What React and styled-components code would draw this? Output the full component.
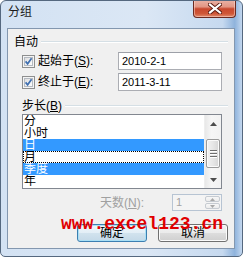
import React from "react";
import styled, { createGlobalStyle } from "styled-components";

const Global = createGlobalStyle`
  html, body { margin: 0; padding: 0; background: #ffffff; }
  body { width: 243px; height: 257px; overflow: hidden; }
  * { box-sizing: border-box; }
`;

const FONT = `"Liberation Sans", "Noto Sans CJK SC", sans-serif`;

const Window = styled.div`
  position: relative;
  width: 243px;
  height: 257px;
  border: 1px solid #55687f;
  border-radius: 6px 6px 5px 5px;
  background: linear-gradient(to right, #d3e2f3 0%, #dbe7f5 60%, #c6d9ef 92%, #8fb3dc 97%, #c4d8ef 100%);
  display: flex;
  flex-direction: column;
  padding: 0 7px 7px 6px;
  font-family: ${FONT};
  font-size: 12px;
  color: #000;
  overflow: hidden;
`;

const TitleBar = styled.div`
  height: 27px;
  display: flex;
  justify-content: space-between;
  align-items: flex-start;
  padding-left: 1px;
`;

const Title = styled.div`
  margin-top: 4px;
  line-height: 14px;
  font-size: 12px;
  color: #1b1b1b;
`;

const CloseButton = styled.div`
  width: 43px;
  height: 18px;
  margin-top: -1px;
  margin-right: -1px;
  border: 1px solid #6b2a20;
  border-top: none;
  border-radius: 0 0 4px 4px;
  background: linear-gradient(to bottom, #eab3a6 0%, #e29684 40%, #c8482e 52%, #cf5737 80%, #e08a6c 100%);
  box-shadow: inset 0 0 0 1px rgba(255, 220, 210, 0.5);
  display: flex;
  align-items: center;
  justify-content: center;
`;

const Client = styled.div`
  flex: 1;
  border: 1px solid #8397af;
  background: #f0f0f0;
  padding: 6px;
  display: flex;
  flex-direction: column;
`;

const Header = styled.div`
  display: flex;
  align-items: center;
  gap: 3px;
  height: 14px;
  line-height: 14px;
  margin-left: ${(p) => p.$indent || 0}px;
  margin-top: ${(p) => p.$top || 0}px;
`;

const HeaderLine = styled.div`
  flex: 1;
  height: 2px;
  border-top: 1px solid #d5dfe5;
  border-bottom: 1px solid #ffffff;
`;

const Section = styled.div`
  padding: 0 6px 0 8px;
  display: flex;
  flex-direction: column;
`;

const Row = styled.div`
  display: grid;
  grid-template-columns: 96px 1fr;
  align-items: center;
  height: 18px;
  margin-top: 3px;
`;

const CheckLabel = styled.div`
  display: flex;
  align-items: center;
  gap: 3px;
  line-height: 14px;
  white-space: nowrap;
`;

const TextBox = styled.div`
  height: 18px;
  border: 1px solid #abadb3;
  border-top-color: #9da0a8;
  background: #ffffff;
  padding-left: 3px;
  font-family: "Liberation Sans", sans-serif;
  font-size: 11px;
  line-height: 16px;
`;

const ListBox = styled.div`
  margin: 1px 6px 0 8px;
  height: 75px;
  border: 1px solid #828790;
  background: #ffffff;
  display: flex;
`;

const Items = styled.div`
  flex: 1;
  display: flex;
  flex-direction: column;
`;

const Item = styled.div`
  height: 12px;
  line-height: 12px;
  padding-left: 1px;
  font-size: 12px;
  background: ${(p) => (p.$selected ? "#3399ff" : "transparent")};
  color: ${(p) => (p.$selected ? "#ffffff" : "#000000")};
  outline: ${(p) => (p.$focus ? "1px dotted #000" : "none")};
  outline-offset: -1px;
  white-space: nowrap;
  overflow: hidden;
`;

const ScrollBar = styled.div`
  width: 17px;
  display: flex;
  flex-direction: column;
  background: linear-gradient(to right, #e8e8e8, #f6f6f6 40%, #f2f2f2);
  border-left: 1px solid #eeeeee;
`;

const ScrollArrow = styled.div`
  height: 17px;
  display: flex;
  align-items: center;
  justify-content: center;
`;

const Track = styled.div`
  flex: 1;
  padding: 7px 1px 0 1px;
`;

const Thumb = styled.div`
  height: 29px;
  border: 1px solid #9a9a9a;
  border-radius: 2px;
  background: linear-gradient(to right, #f2f2f2, #e6e6e6 50%, #d6d6d6);
  box-shadow: inset 0 0 0 1px #fafafa;
  display: flex;
  flex-direction: column;
  align-items: center;
  justify-content: center;
  gap: 2px;
`;

const Grip = styled.div`
  width: 7px;
  height: 1px;
  background: #6f6f6f;
  box-shadow: 0 1px 0 #ffffff;
`;

const SpinRow = styled.div`
  display: flex;
  justify-content: flex-end;
  align-items: center;
  gap: 28px;
  margin-top: 5px;
  padding-right: 6px;
  height: 17px;
`;

const DisabledLabel = styled.div`
  color: #a0a0a0;
  line-height: 14px;
  white-space: nowrap;
`;

const SpinBox = styled.div`
  width: 50px;
  height: 17px;
  border: 1px solid #b7c4d3;
  background: #f4f4f4;
  display: flex;
  align-items: stretch;
  padding: 1px 1px 1px 0;
`;

const SpinText = styled.div`
  flex: 1;
  padding-left: 3px;
  font-family: "Liberation Sans", sans-serif;
  font-size: 11px;
  line-height: 13px;
  color: #a3a3a3;
`;

const SpinButtons = styled.div`
  width: 15px;
  display: flex;
  flex-direction: column;
  gap: 1px;
`;

const SpinBtn = styled.div`
  flex: 1;
  border: 1px solid #c6cbd1;
  border-radius: 2px;
  background: linear-gradient(#f7f7f7, #ececec);
  display: flex;
  align-items: center;
  justify-content: center;
`;

const Buttons = styled.div`
  display: flex;
  justify-content: flex-end;
  gap: 11px;
  margin-top: 13px;
`;

const Button = styled.div`
  width: 70px;
  height: 18px;
  border-radius: 3px;
  border: 1px solid ${(p) => (p.$default ? "#3c7fb1" : "#707070")};
  background: ${(p) =>
    p.$default
      ? "linear-gradient(#eef6fb 0%, #e3eef6 50%, #d2e3ee 50%, #c4d9e8 100%)"
      : "linear-gradient(#f2f2f2 0%, #ebebeb 50%, #dddddd 50%, #cfcfcf 100%)"};
  box-shadow: inset 0 0 0 1px ${(p) => (p.$default ? "#a9dff5" : "#fbfbfb")};
  display: flex;
  align-items: center;
  justify-content: center;
  line-height: 14px;
  font-size: 12px;
`;

const Watermark = styled.div`
  position: absolute;
  left: 60px;
  top: 214px;
  font-family: "Liberation Mono", "DejaVu Sans Mono", monospace;
  font-weight: bold;
  font-size: 18px;
  line-height: 18px;
  color: #e10000;
  white-space: nowrap;
  pointer-events: none;
`;

const Key = styled.span`
  text-decoration: underline;
`;

function CheckBox() {
  return (
    <svg width="13" height="13" viewBox="0 0 13 13">
      <defs>
        <linearGradient id="cbg" x1="0" y1="0" x2="1" y2="1">
          <stop offset="0" stopColor="#dcdcdc" />
          <stop offset="1" stopColor="#ffffff" />
        </linearGradient>
      </defs>
      <rect x="0.5" y="0.5" width="12" height="12" fill="#f4f4f4" stroke="#8e8f8f" />
      <rect x="2.5" y="2.5" width="8" height="8" fill="url(#cbg)" stroke="#b5bac1" />
      <path d="M3.6 6.4 L5.6 8.8 L9.6 3.2" fill="none" stroke="#3f6fb0" strokeWidth="1.7" />
    </svg>
  );
}

function CloseX() {
  return (
    <svg width="14" height="11" viewBox="0 0 14 11">
      <path d="M2 1.5 L12 9.5 M12 1.5 L2 9.5" stroke="#5a1a10" strokeWidth="4" strokeLinecap="square" />
      <path d="M2 1.5 L12 9.5 M12 1.5 L2 9.5" stroke="#ffffff" strokeWidth="2.2" strokeLinecap="square" />
    </svg>
  );
}

function Tri({ down, color = "#4d4d4d", w = 7, h = 4 }) {
  return (
    <svg width={w} height={h} viewBox={`0 0 ${w} ${h}`}>
      <path
        d={down ? `M0 0 L${w} 0 L${w / 2} ${h} Z` : `M0 ${h} L${w} ${h} L${w / 2} 0 Z`}
        fill={color}
      />
    </svg>
  );
}

const items = [
  { t: "分" },
  { t: "小时" },
  { t: "日", s: true },
  { t: "月", f: true },
  { t: "季度", s: true },
  { t: "年" },
];

export default function App() {
  return (
    <>
      <Global />
      <Window>
        <TitleBar>
          <Title>分组</Title>
          <CloseButton>
            <CloseX />
          </CloseButton>
        </TitleBar>
        <Client>
          <Header>
            <span>自动</span>
            <HeaderLine />
          </Header>
          <Section>
            <Row>
              <CheckLabel>
                <CheckBox />
                <span>
                  起始于(<Key>S</Key>):
                </span>
              </CheckLabel>
              <TextBox>2010-2-1</TextBox>
            </Row>
            <Row>
              <CheckLabel>
                <CheckBox />
                <span>
                  终止于(<Key>E</Key>):
                </span>
              </CheckLabel>
              <TextBox>2011-3-11</TextBox>
            </Row>
          </Section>
          <Header $indent={8} $top={8}>
            <span>
              步长(<Key>B</Key>)
            </span>
            <HeaderLine />
          </Header>
          <ListBox>
            <Items>
              {items.map((it) => (
                <Item key={it.t} $selected={it.s} $focus={it.f}>
                  {it.t}
                </Item>
              ))}
            </Items>
            <ScrollBar>
              <ScrollArrow>
                <Tri />
              </ScrollArrow>
              <Track>
                <Thumb>
                  <Grip />
                  <Grip />
                  <Grip />
                </Thumb>
              </Track>
              <ScrollArrow>
                <Tri down />
              </ScrollArrow>
            </ScrollBar>
          </ListBox>
          <SpinRow>
            <DisabledLabel>
              天数(<Key>N</Key>):
            </DisabledLabel>
            <SpinBox>
              <SpinText>1</SpinText>
              <SpinButtons>
                <SpinBtn>
                  <Tri color="#a8a8a8" w={5} h={3} />
                </SpinBtn>
                <SpinBtn>
                  <Tri down color="#a8a8a8" w={5} h={3} />
                </SpinBtn>
              </SpinButtons>
            </SpinBox>
          </SpinRow>
          <Buttons>
            <Button $default>确定</Button>
            <Button>取消</Button>
          </Buttons>
        </Client>
        <Watermark>www.excel123.cn</Watermark>
      </Window>
    </>
  );
}
